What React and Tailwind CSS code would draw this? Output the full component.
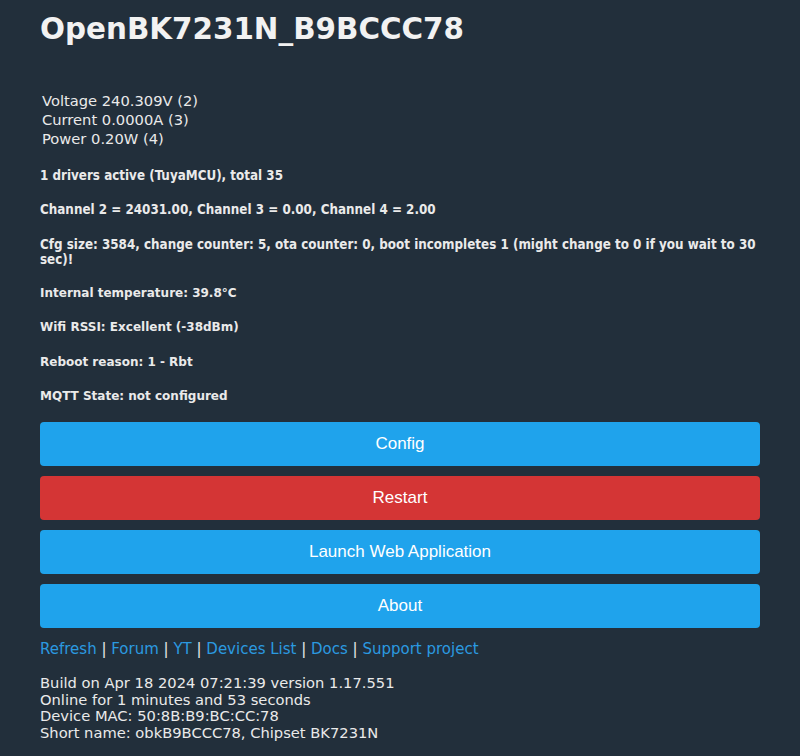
const links = ["Refresh", "Forum", "YT", "Devices List", "Docs", "Support project"];

const buttons = [
  { label: "Config", color: "bg-[#1fa3ec]" },
  { label: "Restart", color: "bg-[#d43535]" },
  { label: "Launch Web Application", color: "bg-[#1fa3ec]" },
  { label: "About", color: "bg-[#1fa3ec]" },
];

const App = () => {
  return (
    <div className="min-h-[756px] bg-[#222f3b] text-[#eaeaea] font-['Verdana','DejaVu_Sans',sans-serif] px-10 pt-[10px]">
      <h1 className="text-[29.4px] font-bold leading-[38px] text-[#f2f2f2]">OpenBK7231N_B9BCCC78</h1>

      <div className="mt-[43px] pl-[2px] text-[14.7px] leading-[19px]">
        <div>Voltage 240.309V (2)</div>
        <div>Current 0.0000A (3)</div>
        <div>Power 0.20W (4)</div>
      </div>

      <div className="mt-[20px] font-bold leading-[15px]">
        <div className="text-[13.3px] font-['DejaVu_Sans_Condensed',sans-serif]">
          <p>1 drivers active (TuyaMCU), total 35</p>
          <p className="mt-[19px]">Channel 2 = 24031.00, Channel 3 = 0.00, Channel 4 = 2.00</p>
          <p className="mt-[20px]">Cfg size: 3584, change counter: 5, ota counter: 0, boot incompletes 1 (might change to 0 if you wait to 30 sec)!</p>
        </div>
        <div className="text-[12px]">
          <p className="mt-[19px]">Internal temperature: 39.8°C</p>
          <p className="mt-[19px]">Wifi RSSI: Excellent (-38dBm)</p>
          <p className="mt-[20px]">Reboot reason: 1 - Rbt</p>
          <p className="mt-[19px]">MQTT State: not configured</p>
        </div>
      </div>

      <div className="mt-[18px] flex flex-col gap-[10px] font-['Liberation_Sans',Arial,sans-serif]">
        {buttons.map((b) => (
          <button key={b.label} className={`${b.color} h-[44px] w-full rounded-[4px] text-[17px] text-white`}>
            {b.label}
          </button>
        ))}
      </div>

      <div className="mt-[11px] text-[15px] leading-[20px] text-[#2b9ae0]">
        {links.map((l, i) => (
          <span key={l}>
            {i > 0 && <span className="text-[#eaeaea]"> | </span>}
            <a href="#" className="text-[#2b9ae0]">{l}</a>
          </span>
        ))}
      </div>

      <div className="mt-[16px] text-[14.7px] leading-[16.7px]">
        <div>Build on Apr 18 2024 07:21:39 version 1.17.551</div>
        <div>Online for 1 minutes and 53 seconds</div>
        <div>Device MAC: 50:8B:B9:BC:CC:78</div>
        <div>Short name: obkB9BCCC78, Chipset BK7231N</div>
      </div>
    </div>
  );
};

export default App;
